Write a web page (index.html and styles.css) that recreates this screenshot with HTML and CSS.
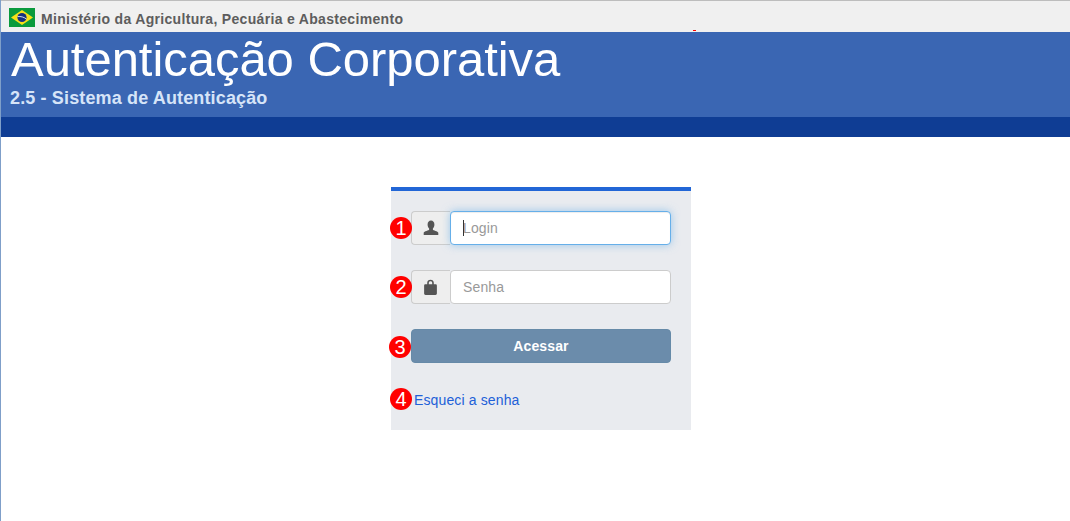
FILE: index.html
```html
<!DOCTYPE html>
<html lang="pt-BR">
<head>
<meta charset="utf-8">
<title>Autenticação Corporativa</title>
<link rel="stylesheet" href="styles.css">
</head>
<body>
<div class="page">
  <div class="gov-bar">
    <svg class="flag" viewBox="0 0 26 19" width="26" height="19" aria-hidden="true">
      <rect width="26" height="19" fill="#0a9a3c"/>
      <polygon points="13,2 24,9.5 13,17 2,9.5" fill="#f7e017"/>
      <circle cx="13" cy="9.5" r="4.6" fill="#17307f"/>
      <path d="M8.6 8.6 C11.5 8.2 15 9 17.4 11" fill="none" stroke="#e8eef0" stroke-width="0.9"/>
    </svg>
    <span class="gov-name">Ministério da Agricultura, Pecuária e Abastecimento</span>
    <span class="red-tick"></span>
  </div>
  <header class="banner">
    <h1 class="title">Autenticação Corporativa</h1>
    <p class="subtitle">2.5 - Sistema de Autenticação</p>
  </header>
  <div class="band"></div>
  <main class="content">
    <form class="panel">
      <span class="marker marker-1">1</span>
      <div class="field">
        <span class="addon">
          <svg class="addon-icon" viewBox="0 0 16 16" width="16" height="16" aria-hidden="true"><path fill="#555" d="M8 .6c2.100 0 3.400 1.700 3.400 3.900 0 1.600-.6 3.200-1.500 4v1.300c0 .7 5.200 1.300 5.400 3v2.200H.7v-2.200c.2-1.700 5.400-2.300 5.400-3V8.500c-.9-.8-1.500-2.400-1.500-4C4.600 2.300 5.900.6 8 .6z"/></svg>
        </span>
        <div class="input-wrap">
          <input class="input input-focus" type="text" placeholder="Login">
          <span class="caret"></span>
        </div>
      </div>
      <span class="marker marker-2">2</span>
      <div class="field">
        <span class="addon">
          <svg class="addon-icon" viewBox="0 0 16 16" width="17" height="17" aria-hidden="true"><path fill="#555" fill-rule="evenodd" d="M4.900 5V3.600C4.900 1.800 6.200.7 8 .7s3.100 1.100 3.100 2.900V5h1.600c.8 0 1.300.5 1.300 1.300v7.400c0 .8-.5 1.300-1.300 1.300H3.300c-.8 0-1.300-.5-1.300-1.300V6.300C2 5.500 2.500 5 3.300 5zm1.500 0h3.200V3.700c0-1-.6-1.600-1.600-1.600s-1.600.6-1.600 1.600z"/></svg>
        </span>
        <div class="input-wrap">
          <input class="input" type="password" placeholder="Senha">
        </div>
      </div>
      <span class="marker marker-3">3</span>
      <button class="submit" type="button">Acessar</button>
      <span class="marker marker-4">4</span>
      <a class="forgot" href="#">Esqueci a senha</a>
    </form>
  </main>
</div>
</body>
</html>
```
FILE: styles.css
```css
* { box-sizing: border-box; }
html, body { margin: 0; padding: 0; height: 100%; background: #fff; }
body { font-family: "Liberation Sans", Arial, sans-serif; overflow: hidden; }
.page { height: 521px; border-left: 1px solid #7f9fc9; }
.gov-bar {
  position: relative;
  display: flex;
  align-items: center;
  gap: 6px;
  height: 32px;
  padding: 4px 0 0 8px;
  background: #f0f0f0;
  border-top: 1px solid #bdbdbd;
}
.flag { display: block; flex: none; margin-top: -3px; }
.gov-name { font-size: 14px; font-weight: bold; color: #5d5d5d; letter-spacing: 0.32px; }
.red-tick { position: absolute; left: 692px; top: 29px; width: 3px; height: 1px; background: #f00; }
.banner { height: 85px; padding: 0 0 0 10px; background: #3a66b3; }
.title { margin: 0; font-size: 49px; line-height: 54px; font-weight: normal; color: #fff; letter-spacing: -0.04px; }
.subtitle { margin: 0 0 0 -1px; font-size: 18px; line-height: 24px; font-weight: bold; color: #d6e4f8; letter-spacing: 0.14px; }
.band { height: 20px; background: #0f3d94; }
.content { display: flex; justify-content: center; padding: 50px 0 0 11px; }
.panel {
  position: relative;
  display: flex;
  flex-direction: column;
  width: 300px;
  height: 243px;
  padding: 20px 20px 0;
  background: #e9ebef;
  border-top: 4px solid #2266d6;
}
.field { display: flex; height: 34px; margin-bottom: 25px; }
.addon {
  display: flex;
  align-items: center;
  justify-content: center;
  flex: none;
  width: 39px;
  background: #eee;
  border: 1px solid #ccc;
  border-right: 0;
  border-radius: 4px 0 0 4px;
}
.addon-icon { margin-right: 1px; }
.input-wrap { position: relative; flex: 1; }
.input {
  display: block;
  width: 100%;
  height: 34px;
  padding: 0 12px;
  font: 14px "Liberation Sans", Arial, sans-serif;
  letter-spacing: 0.13px;
  color: #555;
  background: #fff;
  border: 1px solid #ccc;
  border-radius: 4px;
  outline: none;
}
.input::placeholder { color: #999; opacity: 1; }
.input-focus {
  border-color: #66afe9;
  box-shadow: inset 0 1px 1px rgba(0,0,0,.075), 0 0 8px rgba(102,175,233,.6);
}
.caret { position: absolute; left: 13px; top: 9px; width: 1px; height: 16px; background: #333; }
.submit {
  display: block;
  width: 100%;
  height: 34px;
  margin-bottom: 26px;
  font: bold 14px "Liberation Sans", Arial, sans-serif;
  letter-spacing: 0.13px;
  color: #fff;
  background: #6b8cab;
  border: 1px solid #668aa8;
  border-radius: 4px;
}
.forgot { margin-left: 3px; padding-top: 1px; font-size: 14px; line-height: 20px; letter-spacing: 0.13px; color: #2160d8; text-decoration: none; }
.marker {
  position: absolute;
  display: flex;
  align-items: center;
  justify-content: center;
  width: 22px;
  height: 22px;
  font-size: 20px;
  line-height: 22px;
  color: #fff;
  background: #f00;
  border-radius: 50%;
}
.marker-1 { left: -1px; top: 26px; }
.marker-2 { left: -1px; top: 85px; }
.marker-3 { left: -2px; top: 145px; }
.marker-4 { left: -1px; top: 197px; }
```
